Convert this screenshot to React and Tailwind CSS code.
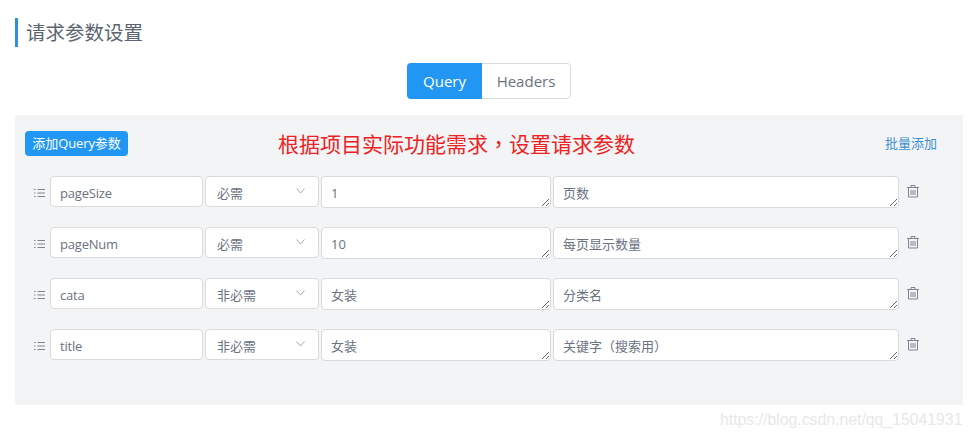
import React from 'react';

const rows = [
  { name: 'pageSize', need: '必需', value: '1', desc: '页数' },
  { name: 'pageNum', need: '必需', value: '10', desc: '每页显示数量' },
  { name: 'cata', need: '非必需', value: '女装', desc: '分类名' },
  { name: 'title', need: '非必需', value: '女装', desc: '关键字（搜索用）' },
];

function DragIcon() {
  return (
    <svg width="11" height="10" viewBox="0 0 11 10" className="text-[#7d8590]" fill="none" stroke="currentColor" strokeWidth="1">
      <path d="M0 1.5h1.5M0 5h1.5M0 8.5h1.5M3.5 1.5H11M3.5 5H11M3.5 8.5H11" />
    </svg>
  );
}

function TrashIcon() {
  return (
    <svg width="12" height="13" viewBox="0 0 12 13" className="text-[#7d8590]" fill="none" stroke="currentColor" strokeWidth="1">
      <path d="M0 2.5h12M4 2.5v-2h4v2M1.5 2.5v9.5h9V2.5M4 5v5M6 5v5M8 5v5" />
    </svg>
  );
}

function Chevron() {
  return (
    <svg width="9" height="6" viewBox="0 0 9 6" fill="none" stroke="#a3a8b0" strokeWidth="1">
      <path d="M0.5 0.5L4.5 5L8.5 0.5" />
    </svg>
  );
}

const boxClass = 'bg-white border border-[#d9dadc] rounded-[4px] text-[13px] text-[#6b7280] outline-none';

export default function App() {
  return (
    <div className="w-[970px] h-[438px] relative bg-white pt-[18px] pl-[15px] overflow-hidden font-['Open_Sans','Noto_Sans_CJK_SC',sans-serif]">
      <div className="h-[29px] border-l-[3px] border-[#2d8fdd] pl-2 text-[19.5px] leading-[30px] text-[#5b6470]">
        请求参数设置
      </div>

      <div className="w-[948px] mt-4 flex justify-center">
        <div className="flex h-9 rounded-[4px] overflow-hidden text-[15px]">
          <div className="w-[75px] bg-[#2196f3] text-white flex items-center justify-center">Query</div>
          <div className="w-[89px] border border-l-0 border-[#d9dadc] rounded-r-[4px] text-[#6b7280] flex items-center justify-center">Headers</div>
        </div>
      </div>

      <div className="w-[948px] h-[290px] mt-4 bg-[#f3f4f6] pt-4 pl-[10px]">
        <div className="flex items-center h-[25px]">
          <button className="w-[103px] h-[25px] bg-[#2196f3] text-white text-[13px] tracking-[-0.1px] rounded-[4px] flex items-center justify-center whitespace-nowrap">
            添加Query参数
          </button>
          <div className="ml-[150px] w-[358px] text-[21px] leading-[25px] text-[#ee2222] whitespace-nowrap">
            根据项目实际功能需求<span className="font-['Noto_Sans_CJK_TC']">，</span>设置请求参数
          </div>
          <div className="ml-[249px] text-[13px] text-[#3d8fcf] whitespace-nowrap">批量添加</div>
        </div>

        <div className="mt-[20px] flex flex-col gap-[19px]">
          {rows.map((row) => (
            <div key={row.name} className="flex h-8 items-start">
              <div className="w-[25px] h-[33px] flex items-center pl-[9px]">
                <DragIcon />
              </div>
              <input
                readOnly
                value={row.name}
                className={`${boxClass} w-[153px] h-[31px] pl-[9px] pt-[2px] tracking-[-0.2px]`}
              />
              <div className={`${boxClass} ml-[2px] w-[114px] h-[31px] pl-[11px] pr-[13px] flex items-center justify-between`}>
                <span className="pt-[4px]">{row.need}</span>
                <span className="flex pb-[1px]"><Chevron /></span>
              </div>
              <textarea
                readOnly
                value={row.value}
                className={`${boxClass} resize ml-[2px] w-[230px] h-8 px-[9px] pt-[7px] leading-[18px]`}
              />
              <textarea
                readOnly
                value={row.desc}
                className={`${boxClass} resize ml-[2px] w-[346px] h-8 px-[9px] pt-[7px] leading-[18px] ${row.name === 'title' ? "font-['Noto_Sans_CJK_TC','Noto_Sans_CJK_SC',sans-serif]" : ''}`}
              />
              <div className="ml-[8px] mt-[9px]">
                <TrashIcon />
              </div>
            </div>
          ))}
        </div>
      </div>

      <div className="absolute left-[720px] top-[410px] text-[15.8px] leading-5 text-[#e8e8e8] font-['Liberation_Sans',sans-serif] whitespace-nowrap">
        https://blog.csdn.net/qq_15041931
      </div>
    </div>
  );
}
